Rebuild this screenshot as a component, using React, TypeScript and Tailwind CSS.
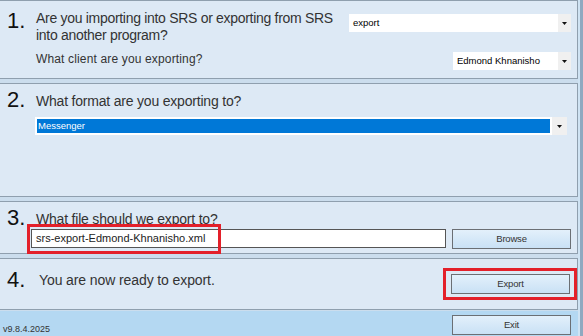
import React from 'react';

const font = { fontFamily: '"Liberation Sans", Arial, sans-serif' };

function Select({ value, className }: { value: string; className: string }) {
  return (
    <div className={`flex h-[18px] bg-white ${className}`}>
      <span className="flex-1 pl-[4px] text-[9.5px] leading-[18px] text-black">{value}</span>
      <span className="w-[13px] bg-[#f0f0f0] flex items-center justify-center">
        <svg width="5" height="3" viewBox="0 0 5 3"><path d="M0 0h5L2.5 3z" fill="#111" /></svg>
      </span>
    </div>
  );
}

function Btn({ label }: { label: string }) {
  return (
    <button className="block w-[119px] h-[20px] border border-[#6b6f74] bg-gradient-to-b from-[#e3f0fb] to-[#c9e1f5] text-[9.5px] leading-[18px] text-[#333] tracking-[-0.2px]">
      {label}
    </button>
  );
}

function Num({ n }: { n: string }) {
  return <span className="w-[36px] pl-[7px] text-[22px] leading-[22px] text-[#111] font-light">{n}</span>;
}

export default function App() {
  return (
    <div className="w-[583px] h-[336px] flex bg-[#b4d8f2] overflow-hidden" style={font}>
      <div className="w-[578px] flex flex-col">
        <div className="flex flex-col gap-[4px] bg-[#cbdded] pb-[1px]">
          {/* step 1 */}
          <div className="h-[79px] bg-[#dde9f5] border border-l-0 border-[#8f9fae] flex pt-[9px]">
            <Num n="1." />
            <div className="flex-1 flex flex-col text-[#333]">
              <p className="text-[14px] leading-[17px] tracking-[-0.3px]">
                Are you importing into SRS or exporting from SRS<br />into another program?
              </p>
              <p className="mt-[8px] text-[12px] leading-[14px] tracking-[0.15px]">What client are you exporting?</p>
            </div>
            <div className="w-[222px] mr-[6px] pt-[4px] flex flex-col items-end gap-[20px]">
              <Select value="export" className="w-[222px]" />
              <Select value="Edmond Khnanisho" className="w-[118px]" />
            </div>
          </div>

          {/* step 2 */}
          <div className="h-[114px] bg-[#dde9f5] border border-l-0 border-[#8f9fae] flex flex-col pt-[4px]">
            <div className="flex items-center h-[24px]">
              <Num n="2." />
              <span className="text-[14px] leading-[17px] text-[#333] tracking-[-0.2px] pt-[2px]">What format are you exporting to?</span>
            </div>
            <div className="ml-[35px] mr-[10px] mt-[5px] h-[18px] bg-white flex p-[2px] pr-0">
              <span className="flex-1 bg-[#0078d7] text-white text-[9.5px] leading-[14px] pl-[1px]">Messenger</span>
              <span className="w-[15px] bg-[#f0f0f0] -my-[2px] ml-[2px] flex items-center justify-center">
                <svg width="5" height="3" viewBox="0 0 5 3"><path d="M0 0h5L2.5 3z" fill="#111" /></svg>
              </span>
            </div>
          </div>

          {/* step 3 */}
          <div className="h-[53px] bg-[#dde9f5] border border-l-0 border-[#8f9fae] flex flex-col pt-[5px]">
            <div className="flex items-center h-[22px]">
              <Num n="3." />
              <span className="text-[14px] leading-[17px] text-[#333] tracking-[-0.2px] pt-[3px]">What file should we export to?</span>
            </div>
            <div className="flex items-start ml-[31px]">
              <div className="relative w-[415px] h-[19px] bg-white border border-[#555] text-[11px] leading-[17px] text-[#222] pl-[4px]">
                srs-export-Edmond-Khnanisho.xml
                <div className="absolute -left-[5px] -top-[6px] w-[194px] h-[30px] border-[3px] border-[#e3202a]" />
              </div>
              <div className="ml-[6px]"><Btn label="Browse" /></div>
            </div>
          </div>

          {/* step 4 */}
          <div className="h-[52px] bg-[#dde9f5] border border-l-0 border-[#8f9fae] flex items-start pt-[10px] pr-[7px]">
            <Num n="4." />
            <span className="flex-1 text-[14px] leading-[17px] text-[#333] tracking-[-0.1px] pl-[3px] pt-[3px]">You are now ready to export.</span>
            <div className="relative mt-[5px]">
              <Btn label="Export" />
              <div className="absolute -left-[8px] -top-[6px] w-[134px] h-[32px] border-[3px] border-[#e3202a]" />
            </div>
          </div>
        </div>

        {/* footer */}
        <div className="flex-1 flex items-center justify-between pl-[3px] pr-[7px] pt-[2px]">
          <span className="text-[9px] text-[#333] pt-[10px]">v9.8.4.2025</span>
          <Btn label="Exit" />
        </div>
      </div>
      <div className="w-[2px] bg-[#cfe3f3]" />
      <div className="w-[3px] bg-[#8fa9c0]" />
    </div>
  );
}
